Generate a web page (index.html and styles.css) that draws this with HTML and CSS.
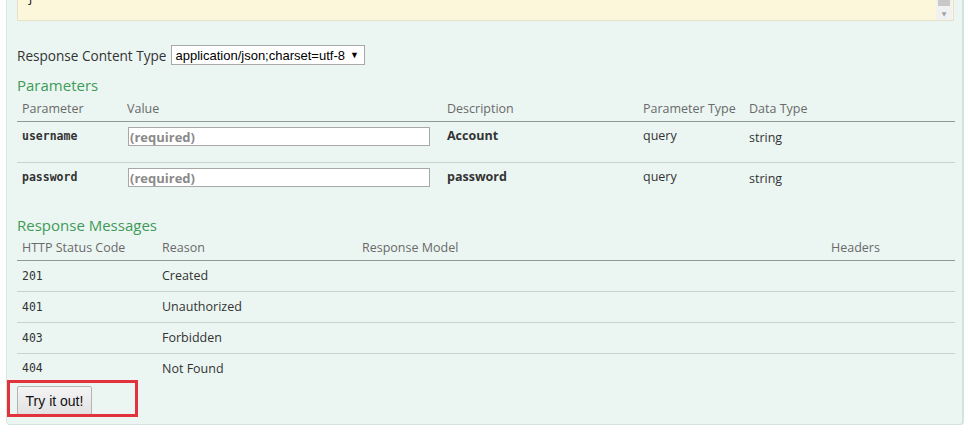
FILE: index.html
```html
<!DOCTYPE html>
<html>
<head>
<meta charset="utf-8">
<link rel="stylesheet" href="styles.css">
</head>
<body>
<div class="panel">
  <div class="codebox">
    <pre class="code">}</pre>
    <div class="scrollbar"><div class="thumb"></div><div class="arrow">▼</div></div>
  </div>
  <div class="ctype">
    <span>Response Content Type</span>
    <span class="select">application/json;charset=utf-8 <span class="caret">▼</span></span>
  </div>
  <h4 class="heading params-h">Parameters</h4>
  <table class="tbl params">
    <thead>
      <tr><th class="c1">Parameter</th><th class="c2">Value</th><th class="c3">Description</th><th class="c4">Parameter Type</th><th class="c5">Data Type</th></tr>
    </thead>
    <tbody>
      <tr><td class="code-name">username</td><td><input class="field" placeholder="(required)"></td><td class="strong">Account</td><td>query</td><td class="dt">string</td></tr>
      <tr><td class="code-name">password</td><td><input class="field" placeholder="(required)"></td><td class="strong">password</td><td>query</td><td class="dt">string</td></tr>
    </tbody>
  </table>
  <h4 class="heading msgs-h">Response Messages</h4>
  <table class="tbl msgs">
    <thead>
      <tr><th class="m1">HTTP Status Code</th><th class="m2">Reason</th><th class="m3">Response Model</th><th class="m4">Headers</th></tr>
    </thead>
    <tbody>
      <tr><td class="code-num">201</td><td>Created</td><td></td><td></td></tr>
      <tr><td class="code-num">401</td><td>Unauthorized</td><td></td><td></td></tr>
      <tr><td class="code-num">403</td><td>Forbidden</td><td></td><td></td></tr>
      <tr class="last"><td class="code-num">404</td><td>Not Found</td><td></td><td></td></tr>
    </tbody>
  </table>
  <div class="actions">
    <button class="try">Try it out!</button>
    <div class="highlight"></div>
  </div>
</div>
</body>
</html>
```
FILE: styles.css
```css
html, body {
  margin: 0;
  padding: 0;
  background: #ffffff;
}
body {
  font-family: "Open Sans", "DejaVu Sans", sans-serif;
  font-size: 12.5px;
  color: #333;
}
.panel {
  margin-left: 6px;
  width: 958px;
  height: 425px;
  box-sizing: border-box;
  background: #ebf6f2;
  border-left: 1px solid #d6e9e1;
  border-right: 2px solid #d3e4de;
  border-bottom: 1px solid #d3e4de;
  border-radius: 0 0 4px 4px;
  padding: 0 8px 0 10px;
}
.codebox {
  position: relative;
  height: 20px;
  background: #fcf6db;
  border: 1px solid #e6e1c8;
  border-top: none;
  overflow: hidden;
}
.code {
  margin: -9px 0 0 9px;
  font-family: "DejaVu Sans Mono", monospace;
  font-size: 12px;
  line-height: 16px;
  color: #222;
}
.scrollbar {
  position: absolute;
  right: 1px;
  top: 0;
  width: 16px;
  height: 20px;
  background: #f1f1f1;
}
.thumb {
  height: 6px;
  margin: 0 2px;
  background: #c8c8c8;
}
.arrow {
  font-size: 6px;
  color: #a3a3a3;
  text-align: center;
  line-height: 10px;
  margin-top: 3px;
}
.ctype {
  display: flex;
  align-items: center;
  gap: 4px;
  margin-top: 24px;
  height: 20px;
  font-size: 13.6px;
}
.select {
  display: inline-flex;
  align-items: center;
  height: 20px;
  box-sizing: border-box;
  border: 1px solid #a9a9a9;
  background: #fff;
  padding: 0 5px 0 4px;
  font-family: "Liberation Sans", Arial, sans-serif;
  font-size: 13px;
  color: #000;
  white-space: nowrap;
}
.caret {
  font-size: 9px;
  margin-left: 5px;
}
.heading {
  margin: 0;
  font-weight: normal;
  font-size: 15px;
  color: #3f9a58;
  line-height: 22px;
}
.params-h {
  margin-top: 9px;
}
.tbl {
  width: 938px;
  border-collapse: collapse;
  table-layout: fixed;
}
.tbl th {
  text-align: left;
  font-weight: normal;
  color: #6a6a6a;
  padding: 0 5px;
  height: 25px;
  border-bottom: 1px solid #8f9a96;
  vertical-align: middle;
  white-space: nowrap;
}
.msgs th {
  height: 24px;
}
.tbl td {
  padding: 0 5px;
  vertical-align: top;
  color: #333;
  white-space: nowrap;
}
.params td {
  height: 41px;
  padding-top: 5px;
  box-sizing: border-box;
}
.params tbody tr:first-child td {
  border-bottom: 1px solid #c8d3cf;
}
.params td.dt {
  padding-top: 7px;
}
.c1 { width: 95px; }
.c2 { width: 310px; }
.c3 { width: 186px; }
.c4 { width: 96px; }
.c5 { width: auto; }
.code-name,
.code-num {
  font-family: "DejaVu Sans Mono", monospace;
  font-size: 11.5px;
}
.code-name {
  font-weight: bold;
  color: #222;
  padding-top: 7px !important;
}
.strong {
  font-weight: bold;
}
.field {
  display: block;
  width: 302px;
  height: 19px;
  box-sizing: border-box;
  margin: 0 0 0 1px;
  border: 1px solid #a8a8a8;
  background: #fff;
  padding: 0 1px;
  font-family: "Open Sans", sans-serif;
  font-size: 13px;
  font-weight: bold;
}
.field::placeholder {
  color: #8a8a8a;
  opacity: 1;
}
.msgs-h {
  margin-top: 10px;
}
.msgs td {
  height: 31px;
  vertical-align: middle;
  border-bottom: 1px solid #c8d3cf;
  box-sizing: border-box;
}
.msgs tr.last td {
  border-bottom: none;
  height: 30px;
}
.m1 { width: 130px; }
.m2 { width: 190px; }
.m3 { width: 459px; }
.m4 { width: auto; }
.code-num {
  color: #222;
}
.actions {
  position: relative;
  height: 30px;
  margin-top: 3px;
}
.try {
  height: 29px;
  width: 75px;
  font-family: "Liberation Sans", Arial, sans-serif;
  font-size: 14px;
  color: #111;
  border: 1px solid #b4b4b4;
  border-radius: 2px;
  background: linear-gradient(#f4f4f4, #e2e2e2);
  padding: 0;
}
.highlight {
  position: absolute;
  left: -10px;
  top: -6px;
  width: 125px;
  height: 31px;
  border: 3px solid #e2323c;
}
```
